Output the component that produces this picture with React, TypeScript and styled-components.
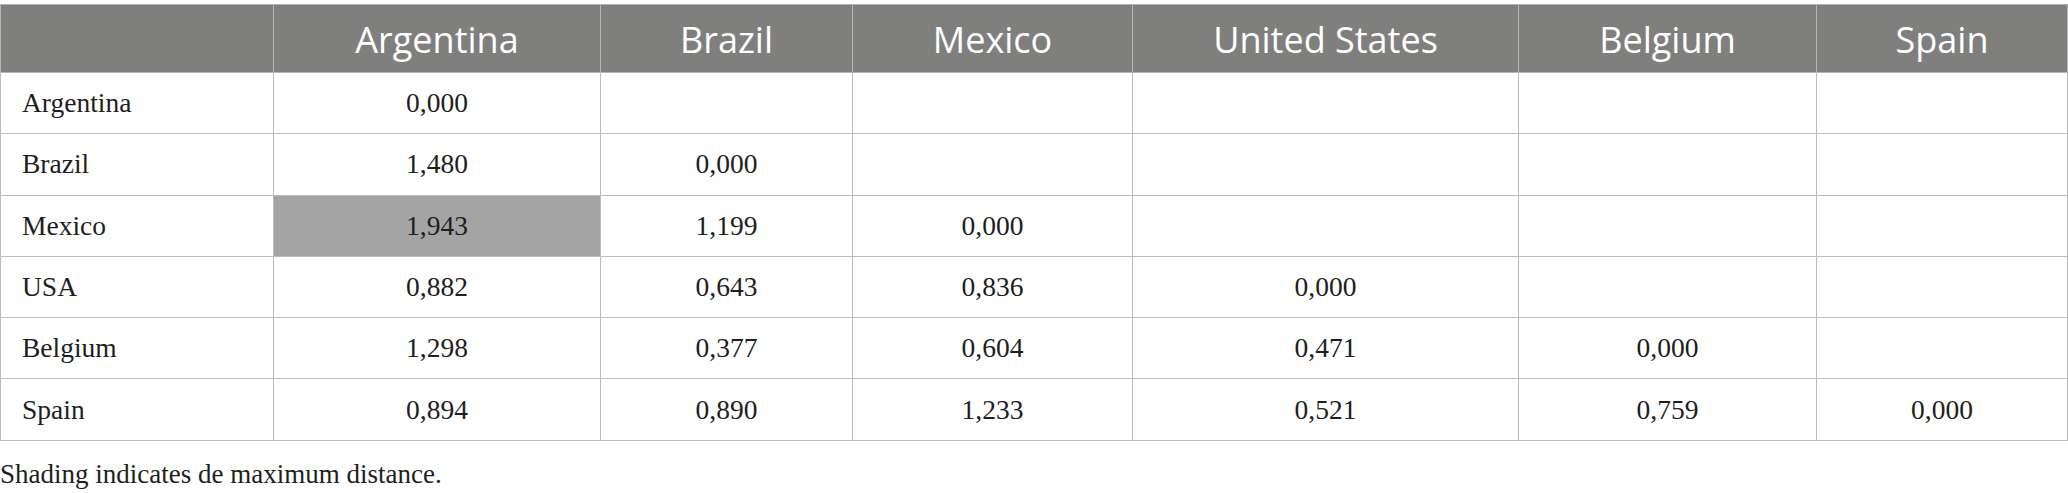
import React from "react";
import styled, { createGlobalStyle } from "styled-components";

const GlobalStyle = createGlobalStyle`
  html, body {
    margin: 0;
    padding: 0;
    background: #ffffff;
  }
`;

const Page = styled.div`
  padding-top: 4px;
  width: 2068px;
  box-sizing: border-box;
`;

const Table = styled.table`
  width: 2067px;
  border-collapse: collapse;
  table-layout: fixed;
  border: 1px solid #bcbcbc;
`;

const HeadRow = styled.tr`
  height: 68px;
`;

const HeadCell = styled.th`
  padding: 3px 0 0 0;
  background: #7f807e;
  color: #ffffff;
  font-family: "Open Sans", "Liberation Sans", sans-serif;
  font-weight: 400;
  font-size: 36px;
  line-height: 1.2;
  text-align: center;
  vertical-align: middle;
  border: 1px solid #b5b5b5;
`;

const BodyRow = styled.tr`
  height: 61.3px;
`;

const LabelCell = styled.td`
  padding: 0 0 0 21px;
  font-family: "Liberation Serif", "Times New Roman", serif;
  font-size: 27.5px;
  color: #1e1e1e;
  text-align: left;
  vertical-align: middle;
  border: 1px solid #bcbcbc;
`;

const ValueCell = styled.td<{ $shaded?: boolean }>`
  padding: 0;
  font-family: "Liberation Serif", "Times New Roman", serif;
  font-size: 27.5px;
  color: #1e1e1e;
  text-align: center;
  vertical-align: middle;
  background: ${(p) => (p.$shaded ? "#a4a4a4" : "#ffffff")};
  border: 1px solid #bcbcbc;
`;

const Footnote = styled.p`
  margin: 18px 0 0 0;
  font-family: "Liberation Serif", "Times New Roman", serif;
  font-size: 27px;
  color: #1e1e1e;
`;

const columns = ["Argentina", "Brazil", "Mexico", "United States", "Belgium", "Spain"];
const widths = [273, 327, 252, 280, 386, 298, 251];

const rows: { label: string; values: string[] }[] = [
  { label: "Argentina", values: ["0,000"] },
  { label: "Brazil", values: ["1,480", "0,000"] },
  { label: "Mexico", values: ["1,943", "1,199", "0,000"] },
  { label: "USA", values: ["0,882", "0,643", "0,836", "0,000"] },
  { label: "Belgium", values: ["1,298", "0,377", "0,604", "0,471", "0,000"] },
  { label: "Spain", values: ["0,894", "0,890", "1,233", "0,521", "0,759", "0,000"] },
];

export default function App() {
  return (
    <>
      <GlobalStyle />
      <Page>
        <Table>
          <colgroup>
            {widths.map((w, i) => (
              <col key={i} style={{ width: w }} />
            ))}
          </colgroup>
          <thead>
            <HeadRow>
              <HeadCell />
              {columns.map((c) => (
                <HeadCell key={c}>{c}</HeadCell>
              ))}
            </HeadRow>
          </thead>
          <tbody>
            {rows.map((r, ri) => (
              <BodyRow key={r.label}>
                <LabelCell>{r.label}</LabelCell>
                {columns.map((_, ci) => (
                  <ValueCell key={ci} $shaded={ri === 2 && ci === 0}>
                    {r.values[ci] ?? ""}
                  </ValueCell>
                ))}
              </BodyRow>
            ))}
          </tbody>
        </Table>
        <Footnote>Shading indicates de maximum distance.</Footnote>
      </Page>
    </>
  );
}
